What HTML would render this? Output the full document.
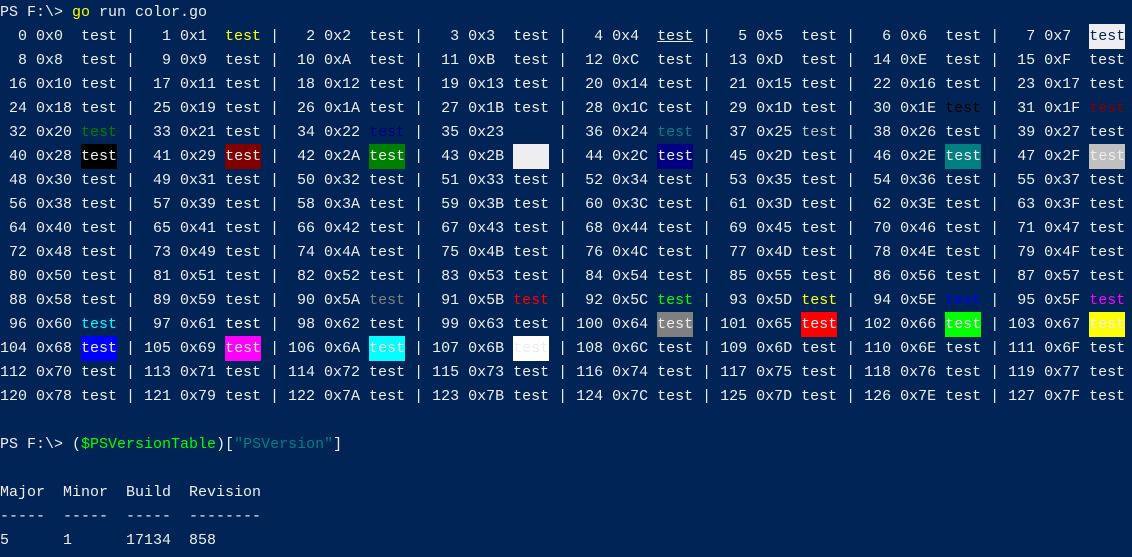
<!DOCTYPE html>
<html><head><meta charset="utf-8"><style>
html,body{margin:0;padding:0;background:#012456;width:1132px;height:557px;overflow:hidden}
pre{margin:0;padding-top:1px;font-family:"Liberation Mono","DejaVu Sans Mono",monospace;font-size:15px;line-height:24px;color:#eeedf0;white-space:pre}
.y{color:#ffff00}.u{text-decoration:underline}
.inv,.b40,.b41,.b42,.b43,.b44,.b46,.b47,.b100,.b101,.b102,.b103,.b104,.b105,.b106,.b107{padding:4px 0}
.inv{background:#eeedf0;color:#012456}
.f30{color:#000}.f31{color:#800000}.f32{color:#008000}.f34{color:#000080}.f35{color:#012456}.f36{color:#008080}.f37{color:#c0c0c0}
.b40{background:#000}.b41{background:#800000}.b42{background:#008000}.b43{background:#eeedf0}.b44{background:#000080}.b46{background:#008080}.b47{background:#c0c0c0}
.f90{color:#808080}.f91{color:#ff0000}.f92{color:#00ff00}.f93{color:#ffff00}.f94{color:#0000ff}.f95{color:#ff00ff}.f96{color:#00ffff}.f97{color:#fff}
.b100{background:#808080}.b101{background:#ff0000}.b102{background:#00ff00}.b103{background:#ffff00}.b104{background:#0000ff}.b105{background:#ff00ff}.b106{background:#00ffff}.b107{background:#fff}
.g{color:#00ff00}.t{color:#008080}
</style></head><body><pre>PS F:\&gt; <span class="y">go</span> run color.go
  0 0x0  test |   1 0x1  <span class="y">test</span> |   2 0x2  test |   3 0x3  test |   4 0x4  <span class="u">test</span> |   5 0x5  test |   6 0x6  test |   7 0x7  <span class="inv">test</span>
  8 0x8  test |   9 0x9  test |  10 0xA  test |  11 0xB  test |  12 0xC  test |  13 0xD  test |  14 0xE  test |  15 0xF  test
 16 0x10 test |  17 0x11 test |  18 0x12 test |  19 0x13 test |  20 0x14 test |  21 0x15 test |  22 0x16 test |  23 0x17 test
 24 0x18 test |  25 0x19 test |  26 0x1A test |  27 0x1B test |  28 0x1C test |  29 0x1D test |  30 0x1E <span class="f30">test</span> |  31 0x1F <span class="f31">test</span>
 32 0x20 <span class="f32">test</span> |  33 0x21 test |  34 0x22 <span class="f34">test</span> |  35 0x23 <span class="f35">test</span> |  36 0x24 <span class="f36">test</span> |  37 0x25 <span class="f37">test</span> |  38 0x26 test |  39 0x27 test
 40 0x28 <span class="b40">test</span> |  41 0x29 <span class="b41">test</span> |  42 0x2A <span class="b42">test</span> |  43 0x2B <span class="b43">test</span> |  44 0x2C <span class="b44">test</span> |  45 0x2D test |  46 0x2E <span class="b46">test</span> |  47 0x2F <span class="b47">test</span>
 48 0x30 test |  49 0x31 test |  50 0x32 test |  51 0x33 test |  52 0x34 test |  53 0x35 test |  54 0x36 test |  55 0x37 test
 56 0x38 test |  57 0x39 test |  58 0x3A test |  59 0x3B test |  60 0x3C test |  61 0x3D test |  62 0x3E test |  63 0x3F test
 64 0x40 test |  65 0x41 test |  66 0x42 test |  67 0x43 test |  68 0x44 test |  69 0x45 test |  70 0x46 test |  71 0x47 test
 72 0x48 test |  73 0x49 test |  74 0x4A test |  75 0x4B test |  76 0x4C test |  77 0x4D test |  78 0x4E test |  79 0x4F test
 80 0x50 test |  81 0x51 test |  82 0x52 test |  83 0x53 test |  84 0x54 test |  85 0x55 test |  86 0x56 test |  87 0x57 test
 88 0x58 test |  89 0x59 test |  90 0x5A <span class="f90">test</span> |  91 0x5B <span class="f91">test</span> |  92 0x5C <span class="f92">test</span> |  93 0x5D <span class="f93">test</span> |  94 0x5E <span class="f94">test</span> |  95 0x5F <span class="f95">test</span>
 96 0x60 <span class="f96">test</span> |  97 0x61 <span class="f97">test</span> |  98 0x62 test |  99 0x63 test | 100 0x64 <span class="b100">test</span> | 101 0x65 <span class="b101">test</span> | 102 0x66 <span class="b102">test</span> | 103 0x67 <span class="b103">test</span>
104 0x68 <span class="b104">test</span> | 105 0x69 <span class="b105">test</span> | 106 0x6A <span class="b106">test</span> | 107 0x6B <span class="b107">test</span> | 108 0x6C test | 109 0x6D test | 110 0x6E test | 111 0x6F test
112 0x70 test | 113 0x71 test | 114 0x72 test | 115 0x73 test | 116 0x74 test | 117 0x75 test | 118 0x76 test | 119 0x77 test
120 0x78 test | 121 0x79 test | 122 0x7A test | 123 0x7B test | 124 0x7C test | 125 0x7D test | 126 0x7E test | 127 0x7F test

PS F:\&gt; (<span class="g">$PSVersionTable</span>)[<span class="t">"PSVersion"</span>]

Major  Minor  Build  Revision
-----  -----  -----  --------
5      1      17134  858
</pre></body></html>
